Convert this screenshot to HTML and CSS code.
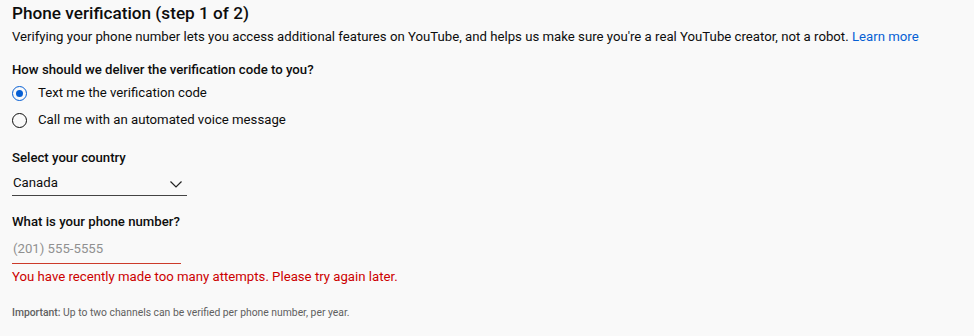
FILE: index.html
```html
<!DOCTYPE html>
<html>
<head>
<meta charset="utf-8">
<link rel="stylesheet" href="styles.css">
</head>
<body>
<div class="page">
  <h1 class="title">Phone verification (step 1 of 2)</h1>
  <p class="desc">Verifying your phone number lets you access additional features on YouTube, and helps us make sure you're a real YouTube creator, not a robot. <a class="link" href="#">Learn more</a></p>

  <div class="label q">How should we deliver the verification code to you?</div>
  <div class="radios">
    <label class="radio"><span class="dot checked"></span><span>Text me the verification code</span></label>
    <label class="radio"><span class="dot"></span><span>Call me with an automated voice message</span></label>
  </div>

  <div class="label country">Select your country</div>
  <div class="select">
    <span>Canada</span>
    <svg class="chev" width="12" height="7" viewBox="0 0 12 7"><path d="M0.5 0.5 L6 6 L11.5 0.5" fill="none" stroke="#222" stroke-width="1.2"/></svg>
  </div>

  <div class="label phone">What is your phone number?</div>
  <div class="input"><span class="ph">(201) 555-5555</span></div>
  <div class="error">You have recently made too many attempts. Please try again later.</div>

  <div class="note"><b>Important:</b> Up to two channels can be verified per phone number, per year.</div>
</div>
</body>
</html>
```
FILE: styles.css
```css
html, body {
  margin: 0;
  padding: 0;
  background: #f9f9f9;
}
body {
  font-family: Roboto, "Noto Sans", sans-serif;
  color: #0d0d0d;
}
.page {
  padding: 3px 12px 0 12px;
  display: flex;
  flex-direction: column;
  align-items: flex-start;
}
.title {
  margin: 0;
  font-size: 17.2px;
  font-weight: 500;
  line-height: 20px;
  color: #0d0d0d;
}
.desc {
  margin: 5px 0 0 0;
  font-size: 13.2px;
  line-height: 18px;
  color: #0d0d0d;
}
.link {
  color: #065fd4;
  text-decoration: none;
}
.label {
  font-size: 13.2px;
  font-weight: 500;
  line-height: 18px;
}
.q { margin-top: 15px; }
.radios {
  display: flex;
  flex-direction: column;
  gap: 9px;
  margin-top: 5px;
}
.radio {
  display: flex;
  align-items: center;
  gap: 11px;
  font-size: 13.2px;
  line-height: 18px;
}
.dot {
  width: 15px;
  height: 15px;
  box-sizing: border-box;
  border: 1.5px solid #0d0d0d;
  border-radius: 50%;
  display: flex;
  align-items: center;
  justify-content: center;
}
.dot.checked {
  border-color: #065fd4;
}
.dot.checked::after {
  content: "";
  width: 7px;
  height: 7px;
  border-radius: 50%;
  background: #065fd4;
}
.country { margin-top: 20px; }
.select {
  margin-top: 7px;
  width: 175px;
  box-sizing: border-box;
  display: flex;
  justify-content: space-between;
  align-items: center;
  font-size: 13.2px;
  line-height: 18px;
  padding: 0 5px 3px 1px;
  border-bottom: 1px solid #444;
}
.chev { margin-top: 2px; }
.phone { margin-top: 17px; }
.input {
  margin-top: 9px;
  width: 168px;
  font-size: 13.2px;
  line-height: 18px;
  padding: 0 0 5px 1px;
  border-bottom: 1px solid #cc3a2a;
}
.ph { color: #909090; }
.error {
  margin-top: 4px;
  font-size: 13.2px;
  line-height: 18px;
  color: #cc0000;
}
.note {
  margin-top: 20px;
  font-size: 10.35px;
  line-height: 14px;
  color: #606060;
}
.note b { font-weight: 500; }
```
